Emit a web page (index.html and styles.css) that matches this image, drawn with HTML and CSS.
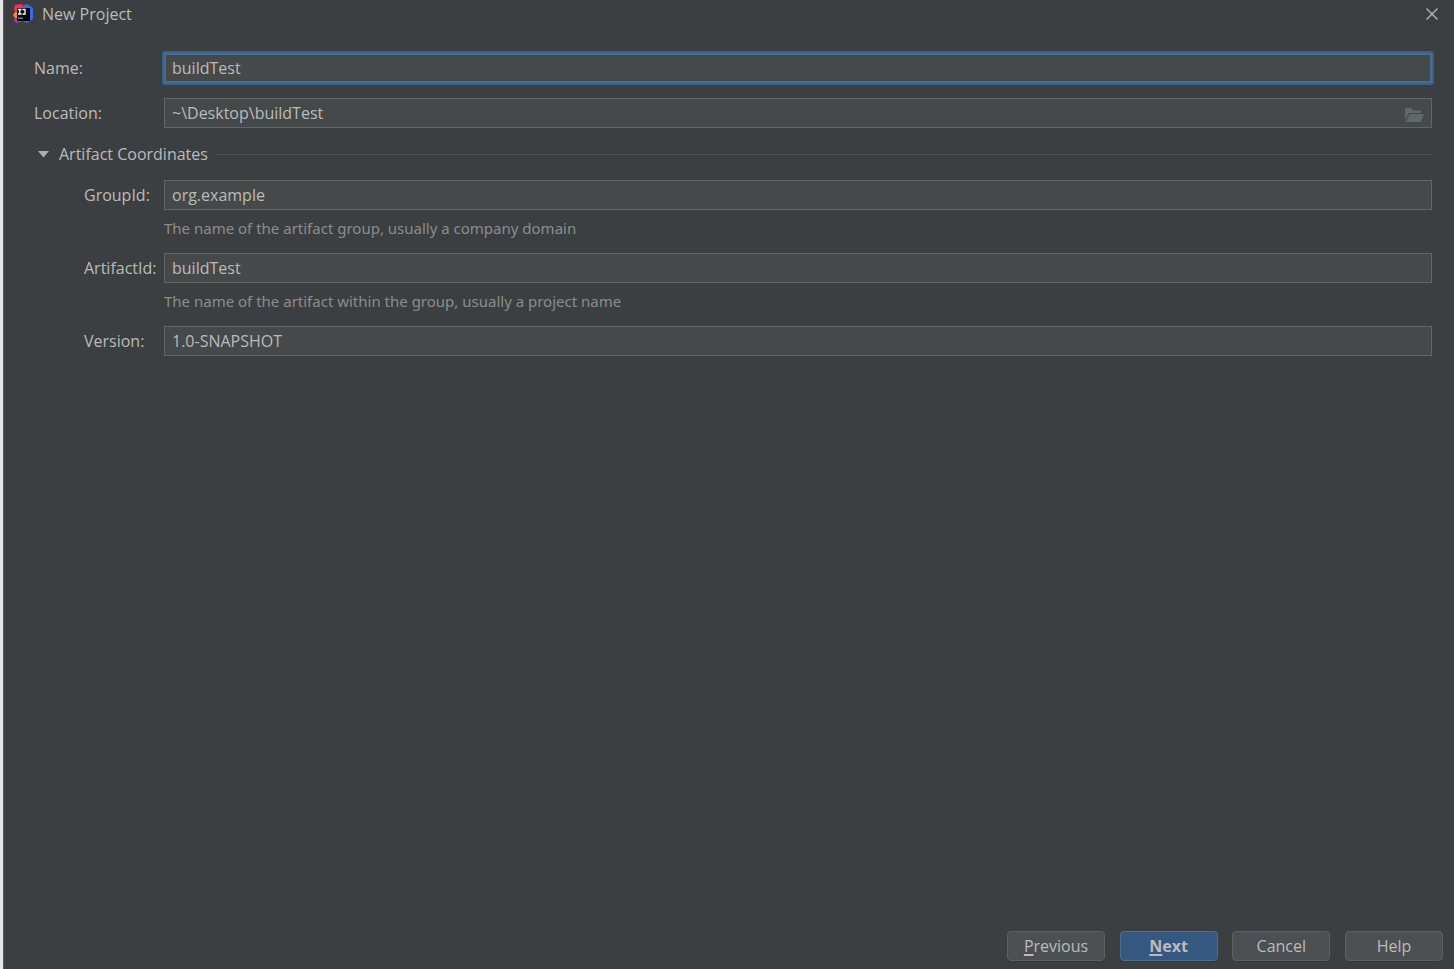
FILE: index.html
```html
<!DOCTYPE html>
<html lang="en">
<head>
<meta charset="utf-8">
<title>New Project</title>
<link rel="stylesheet" href="styles.css">
</head>
<body>
<main class="dialog">
  <header class="titlebar">
    <svg class="logo" viewBox="0 0 20 20" aria-hidden="true">
      <defs>
        <linearGradient id="pink" x1="0" y1="0" x2="0" y2="1"><stop offset="0" stop-color="#ff2d55"/><stop offset=".5" stop-color="#f0305f"/><stop offset="1" stop-color="#a532d8"/></linearGradient>
        <linearGradient id="blue" x1="0" y1="0" x2="1" y2="1"><stop offset="0" stop-color="#7a3ff0"/><stop offset=".4" stop-color="#2f6df2"/><stop offset="1" stop-color="#4a63e8"/></linearGradient>
      </defs>
      <path d="M11 1L14 0L20 4V15L14 19L9 17Z" fill="url(#blue)"/>
      <path d="M2 1L9 0L12 4L6 13L10 17L4 19L1 17L3 11L1 5Z" fill="url(#pink)"/>
      <path d="M0 11L2 8H4V14H2Z" fill="#f68b1f"/>
      <path d="M4 4H17V17H4Z" fill="#080808"/>
      <path d="M5 5.500H8.500M6.800 5.500V10M5 10H8.500M9.500 5.500H12.500M12 5.500V10H9.500" fill="none" stroke="#fff" stroke-width="1.300"/>
      <path d="M5 13.500H10V15H5Z" fill="#777"/>
    </svg>
    <h1 class="title">New Project</h1>
    <button class="close" type="button" aria-label="Close">
      <svg class="close-icon" viewBox="0 0 12 12" aria-hidden="true"><path d="M.5.5L11.500 11.500M11.500.5L.5 11.500" fill="none" stroke="currentColor" stroke-width="1.200"/></svg>
    </button>
  </header>
  <form class="form">
    <div class="row">
      <label class="label" for="name">Name:</label>
      <input class="field field-active" id="name" type="text" value="buildTest">
    </div>
    <div class="row">
      <label class="label" for="location">Location:</label>
      <div class="field path">
        <input class="path-input" id="location" type="text" value="~\Desktop\buildTest">
        <button class="browse" type="button" aria-label="Browse">
          <svg class="folder" viewBox="0 0 19 14" aria-hidden="true"><path d="M0 0H6L8 2.500H16V5H4L0 12Z"/><path d="M4.800 6H19L16 14H.5Z"/></svg>
        </button>
      </div>
    </div>
    <section class="section">
      <button class="section-head" type="button" aria-expanded="true">
        <svg class="arrow" viewBox="0 0 11 7" aria-hidden="true"><path d="M0 0H11L5.500 6.500Z"/></svg>
        <span>Artifact Coordinates</span>
        <span class="rule"></span>
      </button>
      <div class="row nested">
        <label class="label" for="group">GroupId:</label>
        <input class="field" id="group" type="text" value="org.example">
        <p class="hint">The name of the artifact group, usually a company domain</p>
      </div>
      <div class="row nested">
        <label class="label" for="artifact">ArtifactId:</label>
        <input class="field" id="artifact" type="text" value="buildTest">
        <p class="hint">The name of the artifact within the group, usually a project name</p>
      </div>
      <div class="row nested">
        <label class="label" for="version">Version:</label>
        <input class="field" id="version" type="text" value="1.0-SNAPSHOT">
      </div>
    </section>
  </form>
  <footer class="actions">
    <button class="button" type="button"><span class="key">P</span>revious</button>
    <button class="button primary" type="button"><span class="key">N</span>ext</button>
    <button class="button" type="button">Cancel</button>
    <button class="button" type="button">Help</button>
  </footer>
</main>
</body>
</html>
```
FILE: styles.css
```css
* { box-sizing: border-box; }
body {
  margin: 0;
  background: #3c3f41;
  color: #bbbbbb;
  font: 16px/24px "Open Sans", "Noto Sans", sans-serif;
}
button, input { font: inherit; color: inherit; margin: 0; }
.dialog {
  display: flex;
  flex-direction: column;
  min-height: 100vh;
  border-left: 3px solid #e4e4e4;
  box-shadow: inset 1px 0 #555759;
}
.titlebar {
  display: flex;
  align-items: center;
  height: 30px;
  padding: 0 16px 2px 10px;
}
.logo { width: 20px; height: 20px; margin-right: 9px; }
.title { flex: 1; margin: 0; font-size: 16px; font-weight: 400; }
.close {
  display: flex;
  padding: 0;
  border: 0;
  background: none;
}
.close-icon { width: 12px; height: 12px; }
.form { flex: 1; padding: 23px 22px 0 31px; }
.row {
  display: grid;
  grid-template-columns: 130px 1fr;
  align-items: center;
  margin-bottom: 15px;
}
.section .row { margin-bottom: 0; }
.section .nested { grid-template-columns: 80px 1fr; padding-left: 50px; }
.field {
  width: 100%;
  height: 30px;
  padding: 0 7px;
  border: 1px solid #646464;
  border-radius: 0;
  background: #45494a;
  outline: none;
}
.field-active {
  padding: 0 6px;
  border: 2px solid #466d94;
  box-shadow: 0 0 0 2px #3d6185;
  border-radius: 1px;
}
.path { display: flex; align-items: center; }
.path-input {
  flex: 1;
  min-width: 0;
  padding: 0;
  border: 0;
  background: none;
  outline: none;
}
.browse { display: flex; padding: 3px 0 0; border: 0; background: none; }
.folder { width: 19px; height: 14px; fill: #61686b; }
.section { margin-top: -15px; }
.section-head {
  display: flex;
  align-items: center;
  width: 100%;
  height: 52px;
  padding: 0 0 0 4px;
  border: 0;
  background: none;
  text-align: left;
}
.arrow { width: 11px; height: 7px; margin-right: 10px; fill: #adadad; }
.rule { flex: 1; height: 1px; margin-left: 8px; background: #515151; }
.hint {
  grid-column: 2;
  margin: 6px 0 13px;
  color: #8c8c8c;
  font-family: "Noto Sans", "Open Sans", sans-serif;
  font-size: 15px;
}
.actions {
  display: flex;
  justify-content: space-between;
  width: 458px;
  max-width: 100%;
  margin-left: auto;
  padding: 0 11px 8px;
}
.button {
  width: 98px;
  height: 30px;
  padding: 0;
  border: 1px solid #5e6060;
  border-radius: 4px;
  background: #4c5052;
  box-shadow: 0 1px #36393a;
}
.primary { border-color: #4c708c; background: #365880; font-weight: 700; }
.key { text-decoration: underline; text-decoration-thickness: 2px; text-underline-offset: 2px; text-decoration-skip-ink: none; }
```
